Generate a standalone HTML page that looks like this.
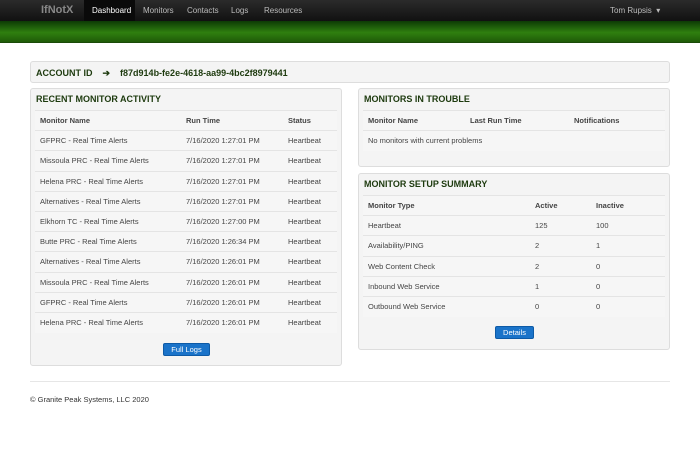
<!DOCTYPE html>
<html><head><style>
*{box-sizing:border-box;margin:0;padding:0}
body{width:700px;height:450px;background:#fff;font-family:"Liberation Sans",Arial,sans-serif;font-size:7.5px;color:#444;position:relative;overflow:hidden}
.nav{position:absolute;top:0;left:0;width:700px;height:21px;background:linear-gradient(#2b2b2b,#111)}
.nav span{position:absolute;top:6px;color:#bbb;font-size:8px}
.band{position:absolute;top:21px;left:0;width:700px;height:22px;background:linear-gradient(#0d3a05,#2f7f0f 55%,#1f5a08);border-bottom:1px solid #1a4a08}
.box{position:absolute;background:#f4f4f4;border:1px solid #ddd;border-radius:3px}
h3{position:absolute;left:5px;top:5px;font-size:9px;color:#1d3a0e;font-weight:bold}
table{position:absolute;border-collapse:collapse}
td,th{height:20.2px;padding:0 5px;text-align:left;border-top:1px solid #e4e4e4;background:#f6f6f6;white-space:nowrap}
th{font-weight:bold;color:#444}
.btn{position:absolute;background:#1a73c9;color:#fff;border:1px solid #0d5aa6;border-radius:2px;font-size:7.5px;text-align:center;line-height:12px;height:13px}
</style></head><body>
<div class="nav">
<span style="left:41px;top:4px;font-size:11px;color:#888;font-weight:bold">IfNotX</span>
<div style="position:absolute;left:84px;top:0;width:51px;height:21px;background:#0a0a0a"></div>
<span style="left:92px;color:#fff">Dashboard</span>
<span style="left:143px">Monitors</span>
<span style="left:187px">Contacts</span>
<span style="left:231px">Logs</span>
<span style="left:264px">Resources</span>
<span style="left:610px">Tom Rupsis &nbsp;▾</span>
</div>
<div class="band"></div>
<div class="box" style="left:30px;top:61px;width:640px;height:22px">
<span style="position:absolute;left:5px;top:6px;font-size:9px;font-weight:bold;color:#1d3a0e">ACCOUNT ID &nbsp;&nbsp;&nbsp;➔ &nbsp;&nbsp;&nbsp;f87d914b-fe2e-4618-aa99-4bc2f8979441</span>
</div>
<div class="box" style="left:30px;top:88px;width:312px;height:278px">
<h3>RECENT MONITOR ACTIVITY</h3>
<table style="left:4px;top:21px;width:302px">
<tr><th style="width:146px">Monitor Name</th><th style="width:102px">Run Time</th><th>Status</th></tr>
<tr><td>GFPRC - Real Time Alerts</td><td>7/16/2020 1:27:01 PM</td><td>Heartbeat</td></tr>
<tr><td>Missoula PRC - Real Time Alerts</td><td>7/16/2020 1:27:01 PM</td><td>Heartbeat</td></tr>
<tr><td>Helena PRC - Real Time Alerts</td><td>7/16/2020 1:27:01 PM</td><td>Heartbeat</td></tr>
<tr><td>Alternatives - Real Time Alerts</td><td>7/16/2020 1:27:01 PM</td><td>Heartbeat</td></tr>
<tr><td>Elkhorn TC - Real Time Alerts</td><td>7/16/2020 1:27:00 PM</td><td>Heartbeat</td></tr>
<tr><td>Butte PRC - Real Time Alerts</td><td>7/16/2020 1:26:34 PM</td><td>Heartbeat</td></tr>
<tr><td>Alternatives - Real Time Alerts</td><td>7/16/2020 1:26:01 PM</td><td>Heartbeat</td></tr>
<tr><td>Missoula PRC - Real Time Alerts</td><td>7/16/2020 1:26:01 PM</td><td>Heartbeat</td></tr>
<tr><td>GFPRC - Real Time Alerts</td><td>7/16/2020 1:26:01 PM</td><td>Heartbeat</td></tr>
<tr><td>Helena PRC - Real Time Alerts</td><td>7/16/2020 1:26:01 PM</td><td>Heartbeat</td></tr>
</table>
<div class="btn" style="left:132px;top:254px;width:47px">Full Logs</div>
</div>
<div class="box" style="left:358px;top:88px;width:312px;height:79px">
<h3>MONITORS IN TROUBLE</h3>
<table style="left:4px;top:21px;width:302px">
<tr><th style="width:102px">Monitor Name</th><th style="width:104px">Last Run Time</th><th>Notifications</th></tr>
<tr><td colspan="3" style="height:20px">No monitors with current problems</td></tr>
</table>
</div>
<div class="box" style="left:358px;top:173px;width:312px;height:177px">
<h3>MONITOR SETUP SUMMARY</h3>
<table style="left:4px;top:21px;width:302px">
<tr><th style="width:167px">Monitor Type</th><th style="width:61px">Active</th><th>Inactive</th></tr>
<tr><td>Heartbeat</td><td>125</td><td>100</td></tr>
<tr><td>Availability/PING</td><td>2</td><td>1</td></tr>
<tr><td>Web Content Check</td><td>2</td><td>0</td></tr>
<tr><td>Inbound Web Service</td><td>1</td><td>0</td></tr>
<tr><td>Outbound Web Service</td><td>0</td><td>0</td></tr>
</table>
<div class="btn" style="left:136px;top:152px;width:39px">Details</div>
</div>
<div style="position:absolute;left:30px;top:381px;width:640px;border-top:1px solid #e6e6e6"></div>
<div style="position:absolute;left:30px;top:395px;color:#333">© Granite Peak Systems, LLC 2020</div>
</body></html>
